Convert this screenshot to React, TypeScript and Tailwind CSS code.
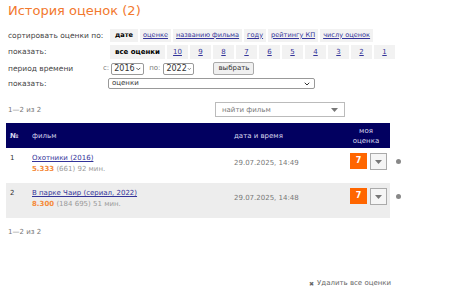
import { ChevronDown } from 'lucide-react';

const sortTabs = [
  { label: 'дате', active: true },
  { label: 'оценке' },
  { label: 'названию фильма' },
  { label: 'году' },
  { label: 'рейтингу КП' },
  { label: 'числу оценок' },
];

const showTabs = ['10', '9', '8', '7', '6', '5', '4', '3', '2', '1'];

const votes = [
  { n: 1, title: 'Охотники (2016)', rating: '5.333', count: '(661)', len: '92 мин.', date: '29.07.2025, 14:49', vote: 7, bg: 'bg-white' },
  { n: 2, title: 'В парке Чаир (сериал, 2022)', rating: '8.300', count: '(184 695)', len: '51 мин.', date: '29.07.2025, 14:48', vote: 7, bg: 'bg-[#ededed]' },
];

function Caret() {
  return (
    <svg width="7" height="4" viewBox="0 0 7 4" className="shrink-0">
      <path d="M0 0h7L3.5 4z" fill="#777" />
    </svg>
  );
}

export default function App() {
  return (
    <div className="h-[294px] w-[458px] overflow-hidden bg-white font-['DejaVu_Sans',sans-serif] text-[7px] text-[#333]">
      <h1 className="pl-[8px] pt-[3px] text-[13px] leading-[16px] text-[#f2792e]">История оценок (2)</h1>

      <div className="mt-[10px] space-y-[3px] pl-[8px]">
        <div className="flex items-center">
          <span className="w-[102px] text-[7.5px] text-[#444]">сортировать оценки по:</span>
          <div className="flex gap-[2px] text-[6.6px]">
            {sortTabs.map((t) => (
              <span
                key={t.label}
                className={`flex h-[13px] items-center bg-[#f2f2f2] px-[3px] ${
                  t.active ? 'px-[5px] font-bold text-black' : 'text-[#333399] underline'
                }`}
              >
                {t.label}
              </span>
            ))}
          </div>
        </div>

        <div className="flex items-center">
          <span className="w-[102px] text-[7.5px] text-[#444]">показать:</span>
          <div className="flex gap-[2px]">
            <span className="flex h-[14px] items-center bg-[#f2f2f2] px-[5px] font-bold text-black">все оценки</span>
            {showTabs.map((t) => (
              <span key={t} className="flex h-[14px] w-[21px] items-center justify-center bg-[#f2f2f2] text-[#333399] underline">
                {t}
              </span>
            ))}
          </div>
        </div>

        <div className="flex items-center">
          <span className="w-[95px] text-[7.5px] text-[#444]">период времени</span>
          <span className="text-[#777]">с:</span>
          <span className="ml-[2px] flex h-[12px] w-[33px] items-center justify-between rounded-[2px] border border-[#999] px-[2px] text-[8px]">
            2016
            <ChevronDown className="h-[8px] w-[8px]" strokeWidth={3} />
          </span>
          <span className="ml-[5px] text-[#777]">по:</span>
          <span className="ml-[3px] flex h-[12px] w-[31px] items-center justify-between rounded-[2px] border border-[#999] px-[2px] text-[8px]">
            2022
            <ChevronDown className="h-[8px] w-[8px]" strokeWidth={3} />
          </span>
          <span className="ml-[19px] flex h-[13px] w-[41px] items-center justify-center rounded-[2px] border border-[#aaa] bg-[#f0f0f0]">
            выбрать
          </span>
        </div>

        <div className="flex items-center">
          <span className="w-[100px] text-[7.5px] text-[#444]">показать:</span>
          <span className="flex h-[11px] w-[207px] items-center justify-between rounded-[2px] border border-[#999] px-[3px]">
            оценки
            <ChevronDown className="h-[8px] w-[8px]" strokeWidth={3} />
          </span>
        </div>
      </div>

      <div className="mt-[13px] flex items-center pl-[8px] pr-[113px]">
        <span className="flex-1 text-[#777]">1—2 из 2</span>
        <span className="flex h-[15px] w-[130px] items-center justify-between border border-[#bbb] px-[6px] text-[#777]">
          найти фильм
          <Caret />
        </span>
      </div>

      <div className="ml-[6px] mt-[6px] w-[384px]">
        <div className="flex h-[25px] items-center bg-[#020060] text-[#d8d8ee]">
          <span className="w-[26px] pl-[4px] font-bold">№</span>
          <span className="w-[202px]">фильм</span>
          <span className="flex-1">дата и время</span>
          <span className="w-[48px] text-center leading-[10px]">
            моя
            <br />
            оценка
          </span>
        </div>

        {votes.map((v) => (
          <div key={v.n} className="relative flex">
            <div className={`flex h-[35px] w-[384px] ${v.bg}`}>
              <span className="w-[26px] pl-[4px] pt-[5px]">{v.n}</span>
              <div className="w-[202px] pt-[5px]">
                <div className="text-[#333399] underline">{v.title}</div>
                <div className="text-[#999]">
                  <span className="font-bold text-[#f58a3a]">{v.rating}</span> {v.count} {v.len}
                </div>
              </div>
              <span className="flex-1 pt-[10px] text-[#777]">{v.date}</span>
              <div className="flex items-start gap-[3px] pr-[3px] pt-[5px]">
                <span className="flex h-[16px] w-[17px] items-center justify-center bg-[#ff6600] text-[8px] font-bold text-white">
                  {v.vote}
                </span>
                <span className="flex h-[17px] w-[17px] items-center justify-center border border-[#aaa] bg-[#f5f5f5]">
                  <Caret />
                </span>
              </div>
            </div>
            <span className="absolute left-[390px] top-[11px] h-[5px] w-[5px] rounded-full bg-[#888]" />
          </div>
        ))}
      </div>

      <div className="mt-[9px] pl-[8px] text-[#777]">1—2 из 2</div>

      <div className="mt-[40px] flex items-center pl-[309px] text-[#666]">
        <span className="mr-[3px] text-[6px]">✖</span>Удалить все оценки
      </div>
    </div>
  );
}
